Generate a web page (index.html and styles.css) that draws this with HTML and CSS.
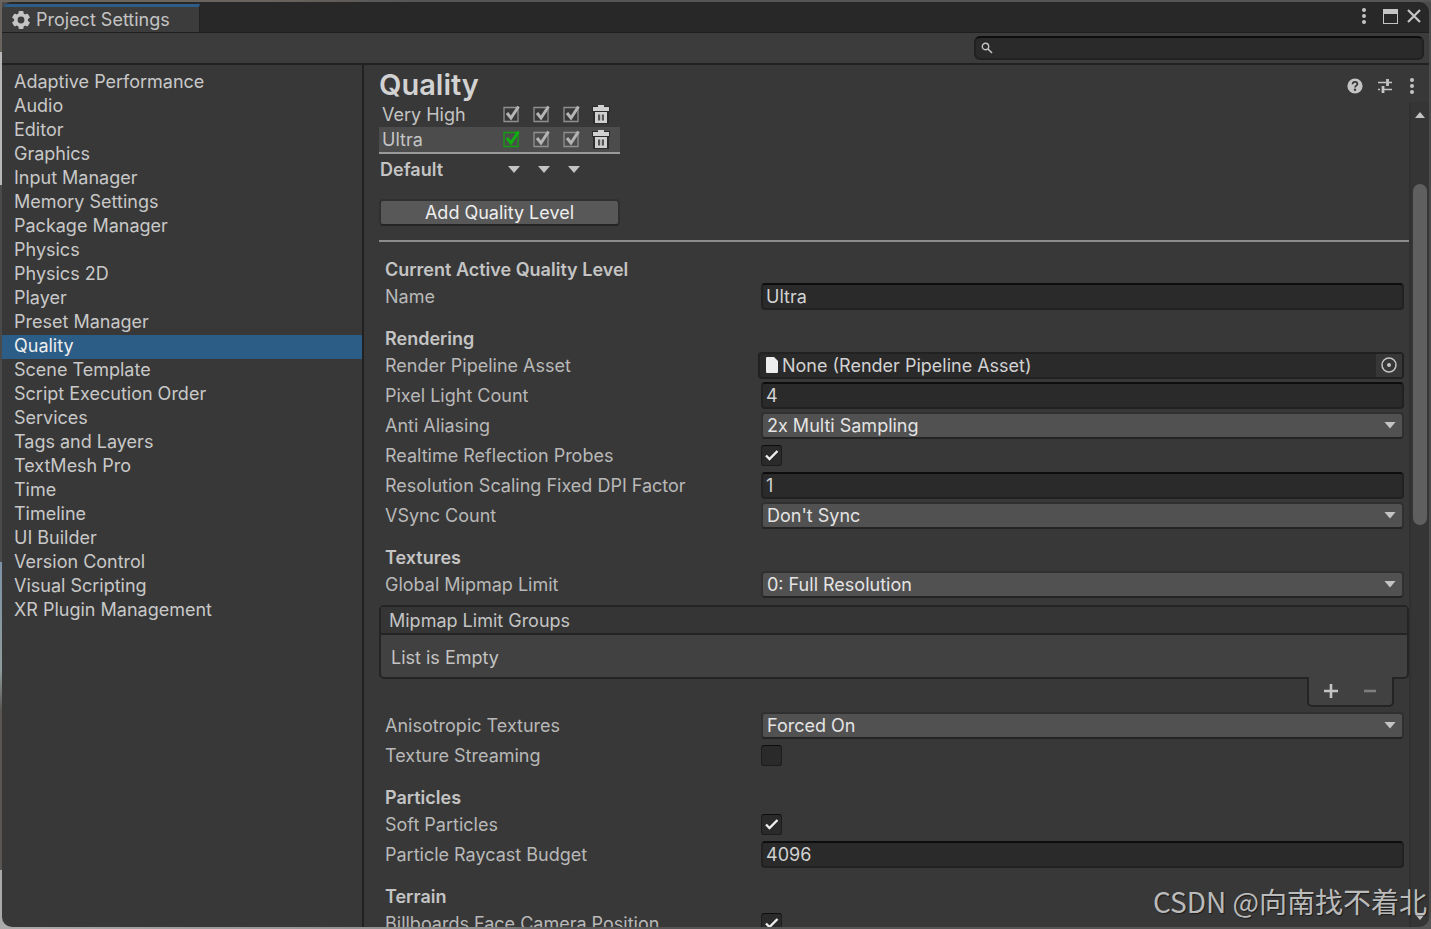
FILE: index.html
```html
<!DOCTYPE html>
<html lang="en">
  <head>
    <meta charset="UTF-8" />
    <meta name="viewport" content="width=device-width, initial-scale=1" />
    <title>Project Settings</title>
    <link rel="stylesheet" href="styles.css">
  </head>
  <body>
    <div class="window">
      <header class="titlebar">
        <div class="tab">
          <svg class="gear" viewBox="0 0 18 18" aria-hidden="true">
            <g fill="#c4c4c4">
              <rect x="6.5" y="0" width="5" height="18" rx="1" />
              <rect x="6.5" y="0" width="5" height="18" rx="1" transform="rotate(60 9 9)" />
              <rect x="6.5" y="0" width="5" height="18" rx="1" transform="rotate(120 9 9)" />
              <circle cx="9" cy="9" r="7" />
            </g>
            <circle cx="9" cy="9" r="3.4" fill="#3c3c3c" />
          </svg>
          <span>Project Settings</span>
        </div>
        <div class="window-buttons">
          <button class="icon-btn" aria-label="Window menu">
            <svg width="4" height="16" viewBox="0 0 4 16" fill="#c4c4c4"><circle cx="2" cy="2" r="2" /><circle cx="2" cy="8" r="2" /><circle cx="2" cy="14" r="2" /></svg>
          </button>
          <button class="icon-btn" aria-label="Maximize">
            <svg width="15" height="15" viewBox="0 0 15 15"><path d="M0 0h15v15H0zM1 5v9h13V5z" fill="#c4c4c4" fill-rule="evenodd" /></svg>
          </button>
          <button class="icon-btn" aria-label="Close">
            <svg width="14" height="14" viewBox="0 0 14 14"><path d="M1 1l12 12M13 1L1 13" stroke="#c4c4c4" stroke-width="2.2" /></svg>
          </button>
        </div>
      </header>

      <div class="toolbar">
        <div class="search">
          <svg width="12" height="12" viewBox="0 0 12 12" fill="none" stroke="#c4c4c4" aria-hidden="true"><circle cx="4.5" cy="4.5" r="3.2" stroke-width="1.4" /><path d="M7 7l4 4" stroke-width="1.6" /></svg>
          <input type="text" aria-label="Search settings" />
        </div>
      </div>

      <div class="body">
        <nav class="sidebar">
          <ul>
            <li><a href="#">Adaptive Performance</a></li>
            <li><a href="#">Audio</a></li>
            <li><a href="#">Editor</a></li>
            <li><a href="#">Graphics</a></li>
            <li><a href="#">Input Manager</a></li>
            <li><a href="#">Memory Settings</a></li>
            <li><a href="#">Package Manager</a></li>
            <li><a href="#">Physics</a></li>
            <li><a href="#">Physics 2D</a></li>
            <li><a href="#">Player</a></li>
            <li><a href="#">Preset Manager</a></li>
            <li><a href="#" class="active">Quality</a></li>
            <li><a href="#">Scene Template</a></li>
            <li><a href="#">Script Execution Order</a></li>
            <li><a href="#">Services</a></li>
            <li><a href="#">Tags and Layers</a></li>
            <li><a href="#">TextMesh Pro</a></li>
            <li><a href="#">Time</a></li>
            <li><a href="#">Timeline</a></li>
            <li><a href="#">UI Builder</a></li>
            <li><a href="#">Version Control</a></li>
            <li><a href="#">Visual Scripting</a></li>
            <li><a href="#">XR Plugin Management</a></li>
          </ul>
        </nav>

        <main class="main">
          <div class="main-header">
            <h1>Quality</h1>
            <div class="header-buttons">
              <button class="icon-btn" aria-label="Help">
                <svg width="16" height="16" viewBox="0 0 16 16"><circle cx="8" cy="8" r="7.6" fill="#c4c4c4" /><path d="M5.6 6.2C5.6 4.6 6.6 3.8 8 3.8s2.4.8 2.4 2.1c0 1.7-2.3 1.7-2.3 3.5" fill="none" stroke="#383838" stroke-width="1.8" /><circle cx="8" cy="11.8" r="1.2" fill="#383838" /></svg>
              </button>
              <button class="icon-btn" aria-label="Presets">
                <svg width="16" height="16" viewBox="0 0 16 16" fill="none" stroke="#c4c4c4"><path d="M1 4.5h8M11 4.5h4M1 11.5h2M6 11.5h9" stroke-width="1.4" /><path d="M10.5 1v7M6 8v7" stroke-width="2.8" /></svg>
              </button>
              <button class="icon-btn" aria-label="More">
                <svg width="4" height="16" viewBox="0 0 4 16" fill="#c4c4c4"><circle cx="2" cy="2" r="2" /><circle cx="2" cy="8" r="2" /><circle cx="2" cy="14" r="2" /></svg>
              </button>
            </div>
          </div>

          <div class="scroll-area">
            <div class="content">
              <table class="levels">
                <tbody>
                  <tr>
                    <th scope="row">Very High</th>
                    <td><input type="checkbox" class="level-check" aria-label="Very High, Standalone" checked /></td>
                    <td><input type="checkbox" class="level-check" aria-label="Very High, Android" checked /></td>
                    <td><input type="checkbox" class="level-check" aria-label="Very High, WebGL" checked /></td>
                    <td>
                      <button class="icon-btn" aria-label="Delete Very High">
                        <svg class="trash" viewBox="0 0 18 20"><path d="M0 1h18v6h-1v12H1V7H0z" fill="#2b2b2b" /><path d="M6 0h6v2h5v4H1V2h5zM3 7h12v11H3z" fill="#d0d0d0" /><path d="M6 9.5h2.2v6H6zM9.8 9.5H12v6H9.8z" fill="#555" /></svg>
                      </button>
                    </td>
                  </tr>
                  <tr class="selected">
                    <th scope="row">Ultra</th>
                    <td><input type="checkbox" class="level-check default" aria-label="Ultra, Standalone" checked /></td>
                    <td><input type="checkbox" class="level-check" aria-label="Ultra, Android" checked /></td>
                    <td><input type="checkbox" class="level-check" aria-label="Ultra, WebGL" checked /></td>
                    <td>
                      <button class="icon-btn" aria-label="Delete Ultra">
                        <svg class="trash" viewBox="0 0 18 20"><path d="M0 1h18v6h-1v12H1V7H0z" fill="#2b2b2b" /><path d="M6 0h6v2h5v4H1V2h5zM3 7h12v11H3z" fill="#d0d0d0" /><path d="M6 9.5h2.2v6H6zM9.8 9.5H12v6H9.8z" fill="#555" /></svg>
                      </button>
                    </td>
                  </tr>
                </tbody>
                <tfoot>
                  <tr>
                    <th scope="row">Default</th>
                    <td><button class="icon-btn arrow" aria-label="Default for Standalone"></button></td>
                    <td><button class="icon-btn arrow" aria-label="Default for Android"></button></td>
                    <td><button class="icon-btn arrow" aria-label="Default for WebGL"></button></td>
                    <td></td>
                  </tr>
                </tfoot>
              </table>

              <button class="add-btn">Add Quality Level</button>
              <hr />

              <section>
                <h2>Current Active Quality Level</h2>
                <div class="row">
                  <label for="name">Name</label>
                  <input type="text" class="field" id="name" value="Ultra" />
                </div>
              </section>

              <section>
                <h2>Rendering</h2>
                <div class="row">
                  <label for="pipeline">Render Pipeline Asset</label>
                  <div class="object-field">
                    <svg width="12" height="16" viewBox="0 0 12 16" aria-hidden="true"><path d="M1 0h7l4 4v11a1 1 0 0 1-1 1H1a1 1 0 0 1-1-1V1a1 1 0 0 1 1-1z" fill="#eee" /></svg>
                    <input type="text" id="pipeline" value="None (Render Pipeline Asset)" readonly />
                    <button class="icon-btn picker" aria-label="Select asset">
                      <svg width="16" height="16" viewBox="0 0 16 16"><circle cx="8" cy="8" r="7" fill="none" stroke="#c4c4c4" stroke-width="1.5" /><circle cx="8" cy="8" r="2" fill="#c4c4c4" /></svg>
                    </button>
                  </div>
                </div>
                <div class="row">
                  <label for="lights">Pixel Light Count</label>
                  <input type="text" class="field" id="lights" value="4" />
                </div>
                <div class="row">
                  <label for="aa">Anti Aliasing</label>
                  <div class="dropdown">
                    <select id="aa"><option>2x Multi Sampling</option></select>
                  </div>
                </div>
                <div class="row">
                  <label for="probes">Realtime Reflection Probes</label>
                  <input type="checkbox" class="check" id="probes" checked />
                </div>
                <div class="row">
                  <label for="dpi">Resolution Scaling Fixed DPI Factor</label>
                  <input type="text" class="field" id="dpi" value="1" />
                </div>
                <div class="row">
                  <label for="vsync">VSync Count</label>
                  <div class="dropdown">
                    <select id="vsync"><option>Don't Sync</option></select>
                  </div>
                </div>
              </section>

              <section>
                <h2>Textures</h2>
                <div class="row">
                  <label for="mipmap">Global Mipmap Limit</label>
                  <div class="dropdown">
                    <select id="mipmap"><option>0: Full Resolution</option></select>
                  </div>
                </div>
                <div class="list">
                  <div class="list-box">
                    <div class="list-title">Mipmap Limit Groups</div>
                    <div class="list-empty">List is Empty</div>
                  </div>
                  <div class="list-footer">
                    <button class="icon-btn" aria-label="Add group">
                      <svg width="16" height="16" viewBox="0 0 16 16"><path d="M8 1v14M1 8h14" stroke="#c4c4c4" stroke-width="2.6" /></svg>
                    </button>
                    <button class="icon-btn" aria-label="Remove group" disabled>
                      <svg width="16" height="16" viewBox="0 0 16 16"><path d="M2 8h12" stroke="#7e7e7e" stroke-width="2.6" /></svg>
                    </button>
                  </div>
                </div>
                <div class="row">
                  <label for="aniso">Anisotropic Textures</label>
                  <div class="dropdown">
                    <select id="aniso"><option>Forced On</option></select>
                  </div>
                </div>
                <div class="row">
                  <label for="streaming">Texture Streaming</label>
                  <input type="checkbox" class="check" id="streaming" />
                </div>
              </section>

              <section>
                <h2>Particles</h2>
                <div class="row">
                  <label for="soft">Soft Particles</label>
                  <input type="checkbox" class="check" id="soft" checked />
                </div>
                <div class="row">
                  <label for="raycast">Particle Raycast Budget</label>
                  <input type="text" class="field" id="raycast" value="4096" />
                </div>
              </section>

              <section>
                <h2>Terrain</h2>
                <div class="row">
                  <label for="billboards">Billboards Face Camera Position</label>
                  <input type="checkbox" class="check" id="billboards" checked />
                </div>
              </section>
            </div>

            <div class="scrollbar">
              <span class="scroll-up"></span>
              <div class="track"><div class="thumb"></div></div>
              <span class="scroll-down"></span>
            </div>
          </div>
        </main>
      </div>
    </div>

    <div class="watermark" lang="zh">CSDN @向南找不着北</div>
  </body>
</html>
```
FILE: styles.css
```css
/* Reset */
* {
  margin: 0;
  padding: 0;
  box-sizing: border-box;
}
body {
  height: 100vh;
  padding: 2px;
  overflow: hidden;
  font-family: Inter, "Noto Sans CJK SC", sans-serif;
  font-size: 18px;
  line-height: 24px;
  color: #c4c4c4;
  background:
    linear-gradient(#6a645e 0 52px, #b8b8b8 52px 185px, #4a4a4a 185px 562px, #7d93a6 562px, #8f9c9c 670px, #5a5653 710px 870px, #aaa 870px) left / 2px 100% no-repeat,
    linear-gradient(90deg, #6a645e 0 260px, #555 420px) top / 100% 2px no-repeat,
    linear-gradient(90deg, #aaa 0, #8c8c8c 480px, #555 560px) bottom / 100% 12px no-repeat,
    #4b4b4b;
}
button,
input,
select {
  font: inherit;
  color: inherit;
}

.window {
  display: flex;
  flex-direction: column;
  height: 100%;
  background: #383838;
  border-radius: 10px;
  overflow: hidden;
}
.icon-btn {
  display: flex;
  align-items: center;
  justify-content: center;
  background: none;
  border: none;
}

/* Title bar */
.titlebar {
  display: flex;
  justify-content: space-between;
  height: 31px;
  flex: none;
  background: #282828;
  border-bottom: 1px solid #1f1f1f;
}
.tab {
  display: flex;
  align-items: center;
  gap: 6px;
  width: 198px;
  margin-top: 2px;
  padding-left: 10px;
  background: #3c3c3c;
  border-top: 3px solid #2c5d87;
  border-right: 1px solid #222;
}
.gear {
  width: 18px;
  height: 18px;
}
.window-buttons {
  display: flex;
  align-items: center;
  gap: 17px;
  padding: 0 8px 2px 0;
}
.window-buttons .icon-btn + .icon-btn + .icon-btn {
  margin-left: -8px;
}

/* Search toolbar */
.toolbar {
  display: flex;
  justify-content: flex-end;
  align-items: center;
  height: 32px;
  flex: none;
  padding-right: 5px;
  background: #3c3c3c;
  border-bottom: 2px solid #212121;
}
.search {
  display: flex;
  align-items: center;
  gap: 8px;
  width: 450px;
  height: 24px;
  padding: 0 5px;
  background: #2a2a2a;
  border: 2px solid #212121;
  border-top-color: #0d0d0d;
  border-radius: 6px;
}
.search input {
  flex: 1;
  min-width: 0;
  height: 20px;
  background: none;
  border: none;
  outline: none;
}

.body {
  display: flex;
  flex: 1;
  min-height: 0;
}

/* Sidebar */
.sidebar {
  width: 362px;
  flex: none;
  padding-top: 6px;
  border-right: 2px solid #212121;
}
.sidebar ul {
  list-style: none;
}
.sidebar a {
  display: block;
  height: 24px;
  padding-left: 12px;
  line-height: 21px;
  color: #c8c8c8;
  text-decoration: none;
}
.sidebar a.active {
  color: #eee;
  background: #2c5d87;
}

/* Main panel */
.main {
  display: flex;
  flex-direction: column;
  flex: 1;
  min-width: 0;
}
.main-header {
  display: flex;
  justify-content: space-between;
  align-items: center;
  height: 37px;
  flex: none;
  padding: 4px 15px 0;
}
h1 {
  font-size: 29px;
  line-height: 32px;
  padding-bottom: 2px;
  font-weight: 600;
  color: #d2d2d2;
}
.header-buttons {
  display: flex;
  gap: 14px;
}
.header-buttons .icon-btn:last-child {
  margin-left: 3px;
}
.scroll-area {
  display: flex;
  flex: 1;
  min-height: 0;
}
.content {
  flex: 1;
  min-width: 0;
  padding-left: 15px;
  overflow: hidden;
}

/* Quality levels */
.levels {
  width: 241px;
  border-collapse: collapse;
  table-layout: fixed;
}
.levels th {
  width: 118px;
  padding-left: 3px;
  font-weight: 400;
  text-align: left;
}
.levels td {
  width: 30px;
}
.levels td:last-child {
  width: 33px;
}
.levels tr {
  height: 25px;
}
.levels .selected {
  height: 26px;
  background: #4c4c4c;
}
.levels tfoot {
  border-top: 2px solid #999;
}
.levels tfoot tr {
  height: 32px;
}
.levels tfoot th {
  padding-left: 1px;
  font-weight: 600;
}
.level-check {
  appearance: none;
  display: block;
  width: 20px;
  height: 20px;
  margin-left: 5px;
  background: url("data:image/svg+xml,%3Csvg xmlns='http://www.w3.org/2000/svg' viewBox='0 0 20 20' fill='none'%3E%3Cpath d='M2 2.5h14v14H2z' stroke='%23909090' stroke-width='1.3'/%3E%3Cpath d='M5 8l4 5L16.5 1.5' stroke='%23b4b4b4' stroke-width='3'/%3E%3C/svg%3E");
}
.level-check.default {
  background: url("data:image/svg+xml,%3Csvg xmlns='http://www.w3.org/2000/svg' viewBox='0 0 20 20' fill='none'%3E%3Cpath d='M2 2.5h14v14H2z' stroke='%2310a010' stroke-width='1.3'/%3E%3Cpath d='M5 8l4 5L16.5 1.5' stroke='%2310b010' stroke-width='3'/%3E%3C/svg%3E");
}
.trash {
  width: 18px;
  height: 20px;
  margin-left: 5px;
}
.arrow {
  width: 12px;
  height: 7px;
  margin-left: 11px;
  background: #c4c4c4;
  clip-path: polygon(0 0, 100% 0, 50% 100%);
}
.add-btn {
  display: block;
  width: 241px;
  height: 27px;
  margin: 14px 0;
  padding-top: 1px;
  line-height: 22px;
  color: #eee;
  background: #585858;
  border: 2px solid #303030;
  border-bottom-color: #242424;
  border-radius: 4px;
}
hr {
  height: 2px;
  margin-bottom: 15px;
  background: #8c8c8c;
  border: none;
}

/* Settings */
section {
  margin-bottom: 15px;
  padding: 0 5px 0 6px;
}
h2 {
  height: 24px;
  font-size: 18px;
  line-height: 26px;
  font-weight: 600;
}
.row {
  display: grid;
  grid-template-columns: 376px 1fr;
  align-items: center;
  height: 30px;
}
.row label {
  padding-top: 2px;
  color: #b8b8b8;
}
.field,
.dropdown select,
.object-field {
  width: 100%;
  height: 27px;
  border: 2px solid #212121;
  border-radius: 4px;
}
.field {
  padding: 0 3px;
  color: #d2d2d2;
  background: #2a2a2a;
  border-top-color: #0d0d0d;
  outline: none;
}
.dropdown {
  position: relative;
}
.dropdown select {
  appearance: none;
  display: block;
  padding: 0 4px;
  color: #e4e4e4;
  background: #515151;
  border-color: #303030;
  border-bottom-color: #242424;
}
.dropdown::after {
  content: "";
  position: absolute;
  top: 10px;
  right: 8px;
  width: 12px;
  height: 7px;
  background: #c4c4c4;
  clip-path: polygon(0 0, 100% 0, 50% 100%);
  pointer-events: none;
}
.object-field {
  display: flex;
  align-items: center;
  gap: 4px;
  width: auto;
  margin-left: -3px;
  padding-left: 6px;
  background: #2a2a2a;
}
.object-field input {
  flex: 1;
  min-width: 0;
  height: 23px;
  padding-top: 2px;
  color: #d2d2d2;
  background: none;
  border: none;
  outline: none;
}
.picker {
  width: 26px;
  height: 23px;
  background: #373737;
}
.check {
  appearance: none;
  display: block;
  width: 21px;
  height: 21px;
  background: #2a2a2a;
  border: 1px solid #1c1c1c;
  border-top-color: #0d0d0d;
  border-radius: 3px;
}
.check:checked {
  background: #2a2a2a url("data:image/svg+xml,%3Csvg xmlns='http://www.w3.org/2000/svg' viewBox='0 0 19 19'%3E%3Cpath d='M4 9.5L7.5 13l8-8' fill='none' stroke='%23eee' stroke-width='2.4'/%3E%3C/svg%3E");
}

/* Mipmap list */
.list {
  margin: 6px -5px 3px -6px;
}
.list-box {
  background: #414141;
  border: 2px solid #242424;
  border-radius: 5px;
}
.list-title {
  height: 28px;
  padding-left: 8px;
  line-height: 27px;
  background: #353535;
  border-bottom: 2px solid #242424;
}
.list-empty {
  padding: 11px 10px 7px;
}
.list-footer {
  display: flex;
  justify-content: space-between;
  position: relative;
  width: 87px;
  height: 30px;
  margin: -2px 15px 0 auto;
  padding: 0 14px;
  background: #414141;
  border: 2px solid #242424;
  border-top: none;
  border-radius: 0 0 5px 5px;
}

/* Scrollbar */
.scrollbar {
  display: flex;
  flex-direction: column;
  align-items: center;
  width: 20px;
  flex: none;
  padding: 10px 0 7px;
  background: #353535;
  border-left: 2px solid #303030;
}
.scroll-up,
.scroll-down {
  width: 10px;
  height: 6px;
  background: #c4c4c4;
  clip-path: polygon(50% 0, 100% 100%, 0 100%);
}
.scroll-down {
  clip-path: polygon(0 0, 100% 0, 50% 100%);
}
.track {
  flex: 1;
  width: 14px;
  padding: 66px 0 4px;
}
.thumb {
  height: 47%;
  background: #5f5f5f;
  border-radius: 7px;
}

.watermark {
  position: absolute;
  right: 4px;
  bottom: 8px;
  font-family: "Liberation Sans Narrow", "Noto Sans CJK SC", sans-serif;
  font-size: 28px;
  line-height: 40px;
  color: rgba(215, 215, 215, 0.85);
  text-shadow: 1px 1px 1px rgba(0, 0, 0, 0.5);
}
```
